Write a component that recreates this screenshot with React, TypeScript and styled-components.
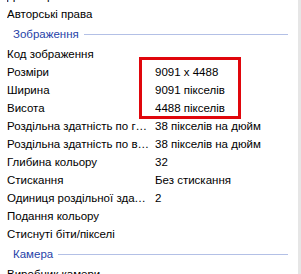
import React from "react";
import styled, { createGlobalStyle } from "styled-components";

const Global = createGlobalStyle`
  html, body { margin: 0; padding: 0; background: #ffffff; }
  body { font-family: "Liberation Sans", Arial, sans-serif; font-size: 11.5px; color: #000; }
`;

const Frame = styled.div`
  width: 301px;
  height: 274px;
  overflow: hidden;
  display: flex;
  align-items: flex-start;
  background: #fff;
`;

const List = styled.div`
  position: relative;
  flex: 1;
  margin-top: -13px;
  display: flex;
  flex-direction: column;
`;

const ScrollEdge = styled.div`
  width: 3px;
  align-self: stretch;
  background: #e6e6e6;
`;

const Row = styled.div`
  flex-shrink: 0;
  display: grid;
  grid-template-columns: 148px 1fr;
  height: 18px;
  line-height: 18px;
  padding-left: 7px;
  white-space: nowrap;
`;

const Name = styled.span`
  overflow: hidden;
  text-overflow: ellipsis;
  padding-right: 6px;
`;

const Value = styled.span`
  overflow: hidden;
`;

const Header = styled.div`
  flex-shrink: 0;
  display: flex;
  align-items: center;
  height: 22px;
  padding-left: 13px;
  padding-right: 10px;
  color: #1f3fa8;
  white-space: nowrap;
  &::after {
    content: "";
    flex: 1;
    height: 1px;
    margin-left: 5px;
    background: #b3c0e6;
  }
`;

const Highlight = styled.div`
  position: absolute;
  left: 139px;
  top: 70px;
  width: 102px;
  height: 62px;
  box-sizing: border-box;
  border: 3px solid #e0060c;
  pointer-events: none;
`;

type Item = { name: string; value?: string } | { header: string };

const items: Item[] = [
  { name: "Дата отримання" },
  { name: "Авторські права" },
  { header: "Зображення" },
  { name: "Код зображення" },
  { name: "Розміри", value: "9091 x 4488" },
  { name: "Ширина", value: "9091 пікселів" },
  { name: "Висота", value: "4488 пікселів" },
  { name: "Роздільна здатність по горизонталі", value: "38 пікселів на дюйм" },
  { name: "Роздільна здатність по вертикалі", value: "38 пікселів на дюйм" },
  { name: "Глибина кольору", value: "32" },
  { name: "Стискання", value: "Без стискання" },
  { name: "Одиниця роздільної здатності", value: "2" },
  { name: "Подання кольору" },
  { name: "Стиснуті біти/пікселі" },
  { header: "Камера" },
  { name: "Виробник камери" },
];

export default function App() {
  return (
    <>
      <Global />
      <Frame>
        <List>
          {items.map((it, i) =>
            "header" in it ? (
              <Header key={i}>{it.header}</Header>
            ) : (
              <Row key={i}>
                <Name>{it.name}</Name>
                <Value>{it.value ?? ""}</Value>
              </Row>
            )
          )}
          <Highlight />
        </List>
        <ScrollEdge />
      </Frame>
    </>
  );
}
